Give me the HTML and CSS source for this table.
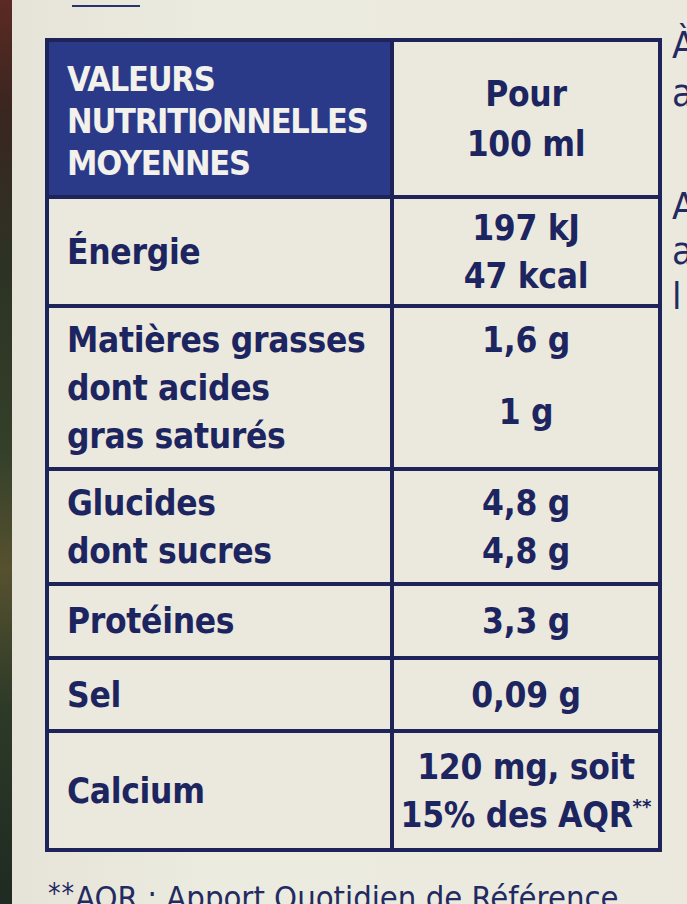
FILE: index.html
```html
<!DOCTYPE html>
<html lang="fr">
<head>
<meta charset="utf-8">
<title>Valeurs nutritionnelles moyennes</title>
<link rel="stylesheet" href="styles.css">
</head>
<body>
<div class="strip"></div>
<main class="paper">
  <div class="topmark"></div>
  <div class="main-row">
    <div class="nutri">
      <div class="cell head-left">
        <div>VALEURS</div>
        <div>NUTRITIONNELLES</div>
        <div>MOYENNES</div>
      </div>
      <div class="cell val head-right">
        <div>Pour</div>
        <div>100 ml</div>
      </div>

      <div class="cell lab"><div>Énergie</div></div>
      <div class="cell val"><div>197 kJ</div><div>47 kcal</div></div>

      <div class="cell lab">
        <div>Matières grasses</div>
        <div>dont acides</div>
        <div>gras saturés</div>
      </div>
      <div class="cell val split">
        <div class="line">1,6 g</div>
        <div class="pair"><div>1 g</div></div>
      </div>

      <div class="cell lab"><div>Glucides</div><div>dont sucres</div></div>
      <div class="cell val"><div>4,8 g</div><div>4,8 g</div></div>

      <div class="cell lab"><div>Protéines</div></div>
      <div class="cell val"><div>3,3 g</div></div>

      <div class="cell lab"><div>Sel</div></div>
      <div class="cell val"><div>0,09 g</div></div>

      <div class="cell lab"><div>Calcium</div></div>
      <div class="cell val"><div>120 mg, soit</div><div>15% des AQR<sup class="sm">**</sup></div></div>
    </div>
    <div class="side">
      <p class="p1">À conserver<br>au frais</p>
      <p class="p2">Après ouverture<br>au réfrigérateur<br>l</p>
    </div>
  </div>
  <p class="footnote"><sup class="ast">**</sup>AQR : Apport Quotidien de Référence</p>
</main>
</body>
</html>
```
FILE: styles.css
```css
html, body {
  margin: 0;
  padding: 0;
}
body {
  width: 687px;
  height: 904px;
  overflow: hidden;
  display: flex;
  background: #eae8dc;
  font-family: "DejaVu Sans Condensed", "DejaVu Sans", sans-serif;
  color: #1d2560;
}
.strip {
  width: 12px;
  flex: none;
  background: linear-gradient(180deg, #5b2a23 0%, #3a2620 12%, #2c3324 30%, #34402a 50%, #56512f 63%, #2e3a28 78%, #1f2a22 100%);
  box-shadow: 2px 0 3px rgba(0,0,0,0.25);
}
.paper {
  flex: 1;
  min-width: 0;
  padding-left: 33px;
  background: linear-gradient(90deg, #e6e4d8 0%, #ecebdf 30%, #ebe9dd 100%);
}
.topmark {
  width: 68px;
  height: 5px;
  margin-left: 27px;
  border-bottom: 2px solid #2a3170;
}
.main-row {
  display: flex;
  align-items: flex-start;
  gap: 10px;
}
.nutri {
  margin-top: 31px;
  display: grid;
  grid-template-columns: 341px 264px;
  grid-template-rows: 153px 105px 159px 111px 70px 69px 115px;
  gap: 4px;
  padding: 4px;
  background: #1e2459;
  flex: none;
}
.cell {
  background: #ebe9dd;
  display: flex;
  flex-direction: column;
  justify-content: center;
  font-weight: 700;
  font-size: 35px;
  line-height: 48px;
  letter-spacing: -0.3px;
  white-space: nowrap;
}
.lab {
  padding-left: 18px;
}
.val {
  align-items: center;
  text-align: center;
}
.head-left {
  background: #2b3a88;
  color: #f2f1ec;
  padding-left: 18px;
  padding-top: 4px;
  font-size: 34px;
  line-height: 42px;
  letter-spacing: -1.2px;
}
.head-right {
  line-height: 50px;
}
.split {
  justify-content: center;
}
.split .line {
  height: 48px;
}
.split .pair {
  height: 96px;
  display: flex;
  align-items: center;
}
.sm {
  font-size: 20px;
  line-height: 0;
  vertical-align: 14px;
  letter-spacing: 0;
}
.side {
  font-size: 38px;
  font-weight: 400;
  white-space: nowrap;
  color: #232a62;
}
.side p {
  margin: 0;
}
.p1 {
  margin-top: 14px !important;
  line-height: 48px;
}
.p2 {
  margin-top: 67px !important;
  line-height: 45px;
}
.footnote {
  margin: 24px 0 0 3px;
  font-size: 32.5px;
  line-height: 44px;
  font-weight: 400;
  white-space: nowrap;
  color: #232a62;
}
.ast {
  font-size: 28px;
  line-height: 0;
  vertical-align: 6px;
  letter-spacing: 1px;
}
```
